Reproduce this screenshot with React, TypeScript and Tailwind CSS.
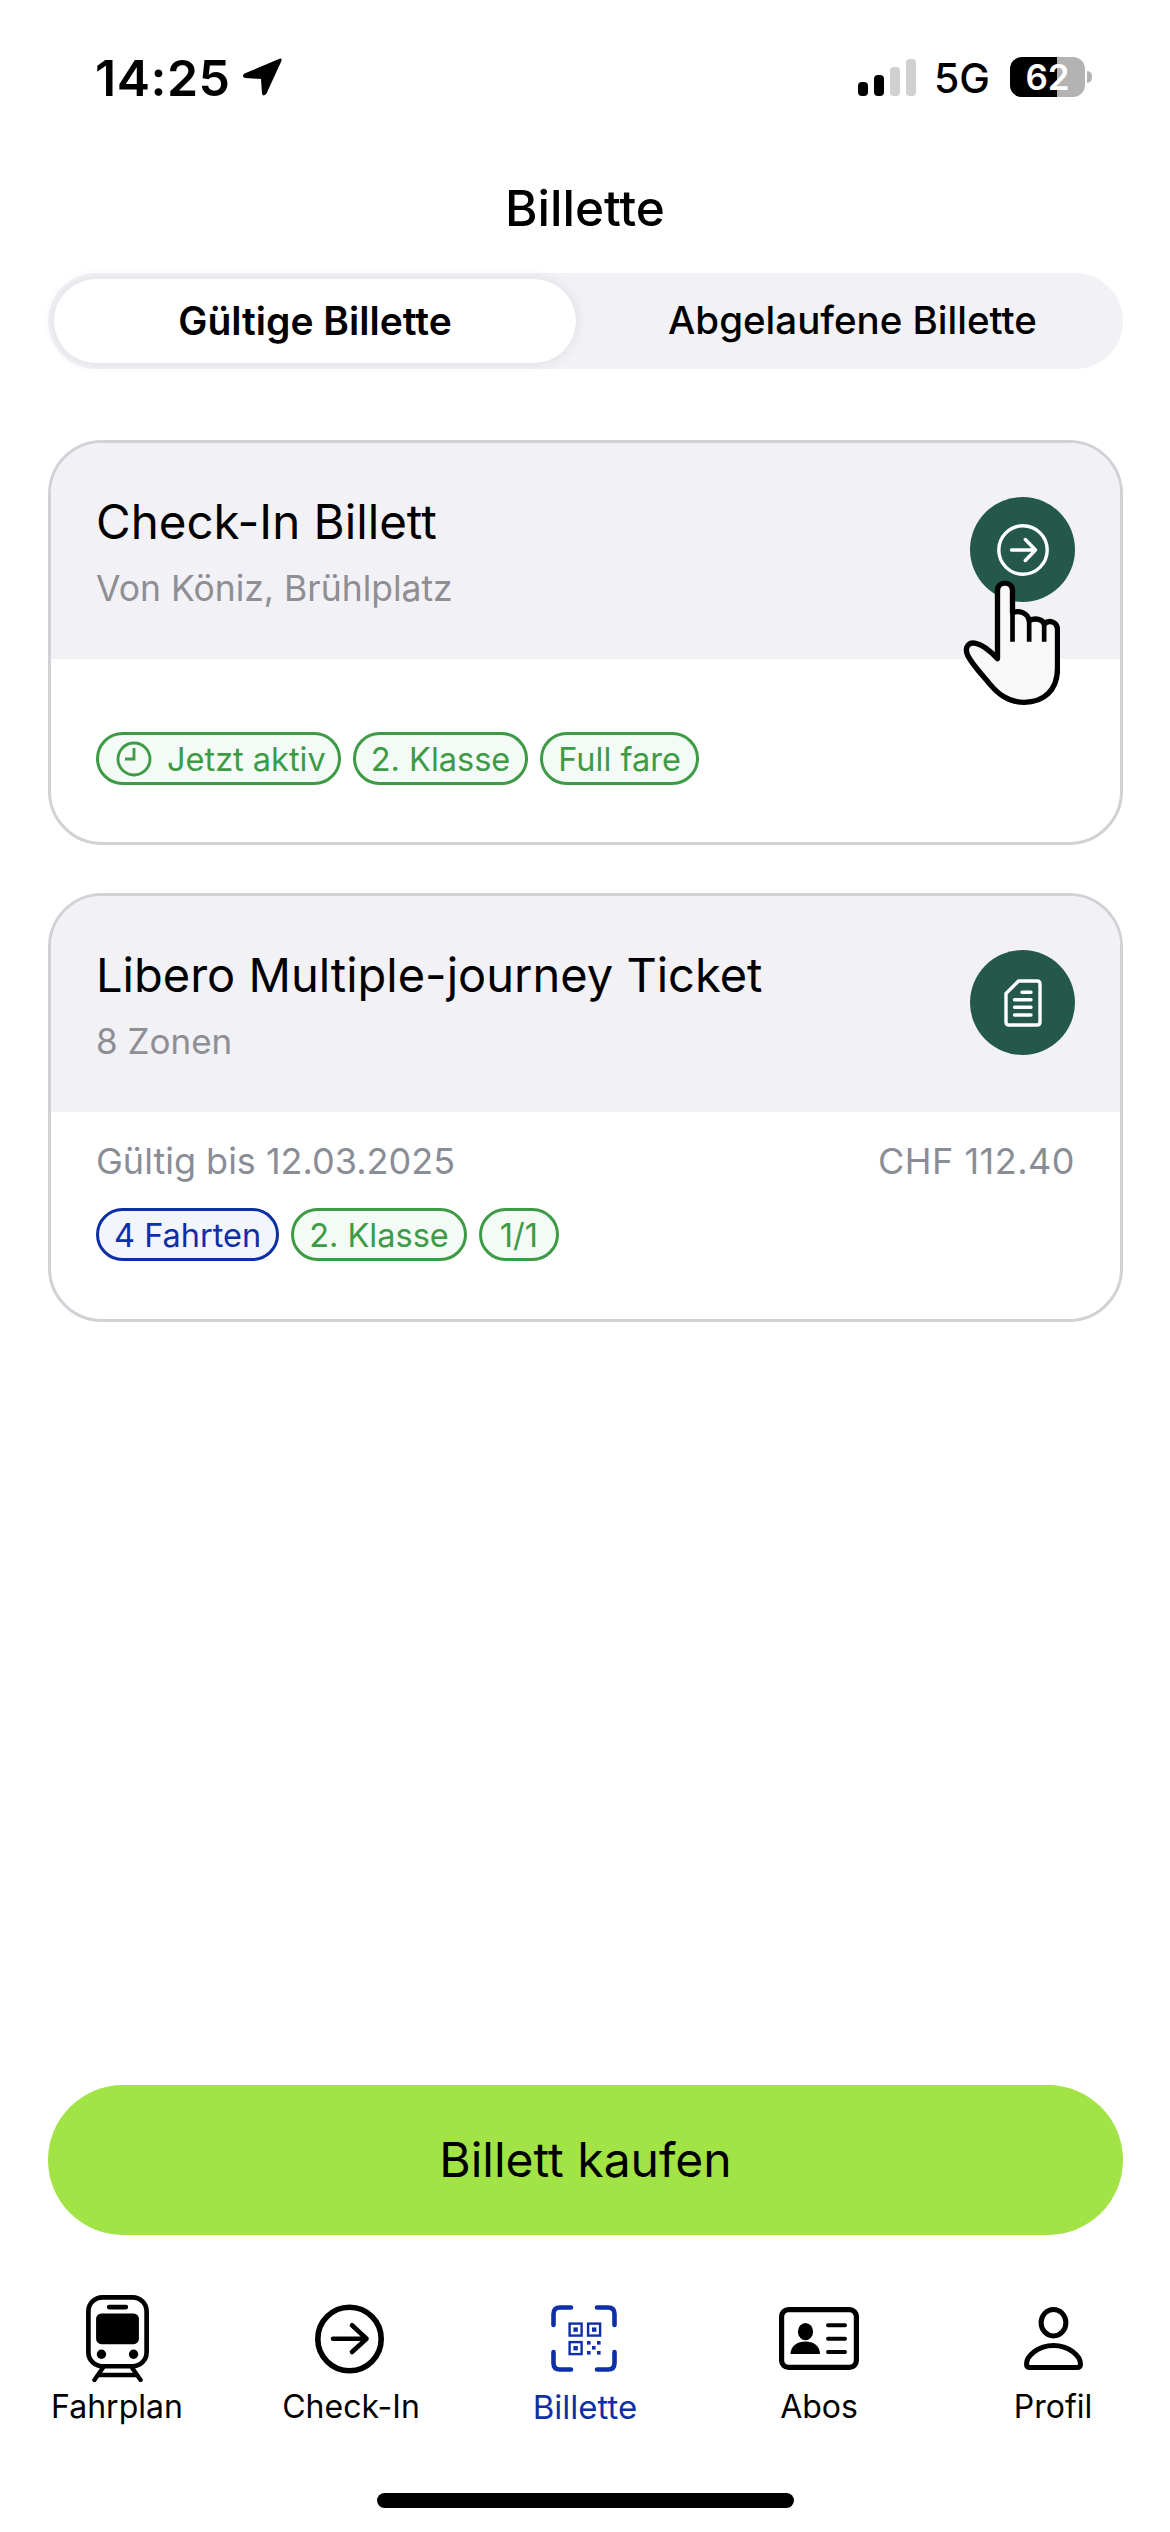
import React from "react";

const font = { fontFamily: "Inter, 'Liberation Sans', sans-serif" };

function Chip({ children, blue, wide }: { children: React.ReactNode; blue?: boolean; wide?: boolean }) {
  return (
    <div
      className={
        (blue
          ? "h-[53px] flex items-center rounded-full border-[3px] border-[#0b2fa6] bg-[#f3f5fc] pt-[3px] text-[32.5px] leading-none text-[#0b2fa6]"
          : "h-[53px] flex items-center rounded-full border-[3px] border-[#3d9a45] bg-[#f4faf6] pt-[3px] text-[32.5px] leading-none text-[#3d9a45]") +
        (wide ? " px-[18px]" : " px-[15px]")
      }
    >
      {children}
    </div>
  );
}

function Circle({ children }: { children: React.ReactNode }) {
  return (
    <div className="mt-[5px] w-[105px] h-[105px] rounded-full bg-[#24584a] flex items-center justify-center shrink-0">
      {children}
    </div>
  );
}

function Train() {
  return (
    <svg width="63" height="87" viewBox="135 75 188 260" fill="none">
      <rect x="142" y="82" width="174" height="206" rx="42" stroke="#000" strokeWidth="14" />
      <rect x="165" y="130" width="128" height="92" rx="16" fill="#000" />
      <rect x="197" y="104" width="64" height="14" rx="7" fill="#000" />
      <circle cx="181" cy="252" r="14" fill="#000" />
      <circle cx="277" cy="252" r="14" fill="#000" />
      <path d="M185 293L160 329M273 293L298 329M172 314H286" stroke="#000" strokeWidth="13" strokeLinecap="round" />
    </svg>
  );
}

function CheckIn() {
  return (
    <svg className="-ml-[3px]" width="69" height="70" viewBox="0 0 69 70" fill="none" stroke="#000" strokeLinecap="round" strokeLinejoin="round">
      <circle cx="34.5" cy="35" r="31.7" strokeWidth="5.6" />
      <path d="M18 34.7H51.5M37 21.3L51.5 34.7L37 48" strokeWidth="4.6" />
    </svg>
  );
}

function Qr() {
  const c = "#0f2fa8";
  return (
    <svg className="-ml-[2px]" width="66" height="67" viewBox="0 0 66 67" fill="none">
      <path
        d="M20 2.5H9Q2.5 2.5 2.5 9V20M46 2.5H57Q63.5 2.5 63.5 9V20M2.5 47V58Q2.5 64.5 9 64.5H20M63.5 47V58Q63.5 64.5 57 64.5H46"
        stroke={c}
        strokeWidth="4.6"
        strokeLinecap="round"
      />
      <rect x="18.6" y="18.6" width="12" height="12" stroke={c} strokeWidth="2.4" />
      <rect x="37.1" y="18.6" width="12" height="12" stroke={c} strokeWidth="2.4" />
      <rect x="18.6" y="37.1" width="12" height="12" stroke={c} strokeWidth="2.4" />
      <rect x="22.4" y="22.4" width="4.4" height="4.4" fill={c} />
      <rect x="41" y="22.4" width="4.4" height="4.4" fill={c} />
      <rect x="22.4" y="41" width="4.4" height="4.4" fill={c} />
      <rect x="36" y="36" width="3.6" height="3.6" fill={c} />
      <rect x="46" y="36" width="3.6" height="3.6" fill={c} />
      <rect x="41" y="41" width="3.6" height="3.6" fill={c} />
      <rect x="36" y="46" width="3.6" height="3.6" fill={c} />
      <rect x="46" y="46" width="3.6" height="3.6" fill={c} />
    </svg>
  );
}

function Abos() {
  return (
    <svg width="80" height="63" viewBox="0 0 80 63" fill="none">
      <rect x="2.6" y="2.6" width="74.8" height="57.8" rx="7" stroke="#000" strokeWidth="5.2" />
      <ellipse cx="26.5" cy="24.7" rx="7.6" ry="8.6" fill="#000" />
      <path d="M11.5 47C11.5 39 18.5 34.5 26.5 34.5C34.5 34.5 41 39 41 47Z" fill="#000" />
      <path d="M49 18.3H66M49 31.7H66M49 45H66" stroke="#000" strokeWidth="4" strokeLinecap="round" />
    </svg>
  );
}

function Profil() {
  return (
    <svg width="59" height="63" viewBox="0 0 59 63" fill="none" stroke="#000" strokeWidth="5">
      <ellipse cx="29.5" cy="15.7" rx="12.4" ry="13.2" />
      <path d="M29.5 38.5C14 38.5 2.5 49 2.5 57Q2.5 60.5 6 60.5H53Q56.5 60.5 56.5 57C56.5 49 45 38.5 29.5 38.5Z" strokeLinejoin="round" />
    </svg>
  );
}

function Tab({ icon, label, active }: { icon: React.ReactNode; label: string; active?: boolean }) {
  return (
    <div className="flex flex-col items-center">
      <div className="h-[87px] flex items-center justify-center">{icon}</div>
      <div className={active ? "mt-[5px] h-[40px] leading-[40px] text-[33px] text-[#0f2fa8]" : "mt-[5px] h-[40px] leading-[40px] text-[32px] text-black"}>
        {label}
      </div>
    </div>
  );
}

function Bar({ h, on }: { h: string; on?: boolean }) {
  return <div className={`w-[10px] rounded-[4px] ${h} ${on ? "bg-black" : "bg-[#d0d0d0]"}`} />;
}

export default function App() {
  return (
    <div style={font} className="w-[1170px] h-[2532px] bg-white flex flex-col pb-[24px] text-black overflow-hidden">
      {/* status bar */}
      <div className="mt-[57px] h-[40px] flex items-center justify-between pl-[95px] pr-[78px]">
        <div className="flex items-center">
          <span className="pt-[2px] text-[50px] font-semibold leading-none tracking-[0.5px]">14:25</span>
          <svg className="ml-[12px]" width="40" height="38" viewBox="0 0 40 38" fill="#000">
            <path d="M37.5 0.7L2.5 15.5Q-1 18 3 20L19 21L20 35.5Q21 39.5 24.5 35.5L39.4 3Q40.2 0 37.5 0.7Z" />
          </svg>
        </div>
        <div className="flex items-center">
          <div className="flex items-end gap-[6px] h-[37px]">
            <Bar h="h-[14px]" on />
            <Bar h="h-[21px]" on />
            <Bar h="h-[29px]" />
            <Bar h="h-[37px]" />
          </div>
          <span className="ml-[18px] pt-[2px] text-[41px] font-medium leading-none">5G</span>
          <div className="ml-[20px] relative w-[75px] h-[40px] rounded-[12px] bg-[#b3b3b3] overflow-hidden">
            <div className="absolute left-0 top-0 bottom-0 w-[47px] bg-black" />
            <span className="absolute inset-0 flex items-center justify-center text-[35px] font-semibold text-white leading-none">62</span>
          </div>
          <div className="ml-[2px] w-[5px] h-[12px] rounded-r-full bg-[#b3b3b3]" />
        </div>
      </div>

      {/* title */}
      <div className="mt-[81px] h-[60px] leading-[60px] text-center text-[49.5px] font-medium">Billette</div>

      {/* segmented */}
      <div className="mt-[35px] ml-[48px] w-[1075px] h-[96px] rounded-full bg-[#f1f1f6] p-[6px] flex">
        <div className="w-[522px] h-[84px] rounded-full bg-white shadow-[0_0_14px_rgba(0,0,0,0.09)] flex items-center justify-center text-[39px] font-semibold">
          Gültige Billette
        </div>
        <div className="flex-1 pl-[12px] flex items-center justify-center text-[38.5px] font-medium">Abgelaufene Billette</div>
      </div>

      {/* card 1 */}
      <div className="relative mt-[71px] ml-[48px] w-[1075px] h-[405px] rounded-[54px] border-[3px] border-[#d1d1d6] overflow-hidden">
        <div className="h-[216px] bg-[#f1f1f6] flex justify-between items-start pt-[49px] pl-[45px] pr-[45px]">
          <div>
            <div className="text-[47.5px] leading-[60px]">Check-In Billett</div>
            <div className="mt-[15px] text-[35.5px] leading-[44px] text-[#8e8e93]">Von Köniz, Brühlplatz</div>
          </div>
          <Circle>
            <svg width="52" height="52" viewBox="0 0 52 52" fill="none" stroke="#fff" strokeLinecap="round" strokeLinejoin="round">
              <circle cx="26" cy="26" r="24.2" strokeWidth="3.4" />
              <path d="M14.5 26H38.5M28.3 15.5L38.5 26L28.3 36.5" strokeWidth="3.4" />
            </svg>
          </Circle>
        </div>
        <div className="pt-[73px] pl-[45px] flex gap-[12px]">
          <Chip>
            <svg className="mr-[15px] ml-[2px] -mt-[3px]" width="36" height="36" viewBox="0 0 36 36" fill="none" stroke="#3d9a45" strokeWidth="2.8">
              <circle cx="18" cy="18" r="16" />
              <path d="M18 7V18H9" />
            </svg>
            <span className="-mr-[3px]">Jetzt aktiv</span>
          </Chip>
          <Chip>2. Klasse</Chip>
          <Chip>Full fare</Chip>
        </div>
        {/* hand cursor */}
        <svg className="absolute left-[912px] top-[137px]" width="97" height="125" viewBox="187 360 290 375">
          <path
            d="M290 596L290 392C290 362 335 362 335 392L335 458C355 450 380 458 385 482C405 472 425 478 430 492C445 478 470 485 470 510L470 625C470 690 430 727 370 727C320 727 290 700 265 670C240 640 215 615 200 585C190 560 205 545 225 550C250 555 275 580 290 596Z"
            fill="#f8f8f8"
            stroke="#000"
            strokeWidth="16"
            strokeLinejoin="round"
          />
          <path d="M335 458V545M385 482V545M430 492V545" fill="none" stroke="#000" strokeWidth="14" />
        </svg>
      </div>

      {/* card 2 */}
      <div className="mt-[48px] ml-[48px] w-[1075px] h-[429px] rounded-[54px] border-[3px] border-[#d1d1d6] overflow-hidden">
        <div className="h-[216px] bg-[#f1f1f6] flex justify-between items-start pt-[49px] pl-[45px] pr-[45px]">
          <div>
            <div className="text-[47px] leading-[60px]">Libero Multiple-journey Ticket</div>
            <div className="mt-[14px] text-[35px] leading-[44px] text-[#8e8e93]">8 Zonen</div>
          </div>
          <Circle>
            <svg width="38" height="48" viewBox="0 0 38 48" fill="none" stroke="#fff" strokeWidth="3.4" strokeLinecap="round" strokeLinejoin="round">
              <path d="M14.5 2H33Q36 2 36 5V43Q36 46 33 46H5Q2 46 2 43V14.5Z" />
              <path d="M18 13.3H27M10.5 20.7H27M10.5 28.3H27M10.5 36H27" />
            </svg>
          </Circle>
        </div>
        <div className="pt-[27px] pl-[45px] pr-[45px]">
          <div className="flex justify-between text-[36px] leading-[44px] text-[#8a8d96]">
            <span>Gültig bis 12.03.2025</span>
            <span className="tracking-[0.5px]">CHF 112.40</span>
          </div>
          <div className="mt-[25px] flex gap-[12px]">
            <Chip blue>4 Fahrten</Chip>
            <Chip>2. Klasse</Chip>
            <Chip wide>1/1</Chip>
          </div>
        </div>
      </div>

      {/* button */}
      <div className="mt-auto ml-[48px] w-[1075px] h-[150px] rounded-full bg-[#a2e346] flex items-center justify-center text-[48px]">
        Billett kaufen
      </div>

      {/* tab bar */}
      <div className="mt-[60px] w-[1170px] grid grid-cols-5">
        <Tab icon={<Train />} label="Fahrplan" />
        <Tab icon={<CheckIn />} label="Check-In" />
        <Tab icon={<Qr />} label="Billette" active />
        <Tab icon={<Abos />} label="Abos" />
        <Tab icon={<Profil />} label="Profil" />
      </div>

      {/* home indicator */}
      <div className="mt-[66px] mx-auto w-[417px] h-[15px] rounded-full bg-black" />
    </div>
  );
}
